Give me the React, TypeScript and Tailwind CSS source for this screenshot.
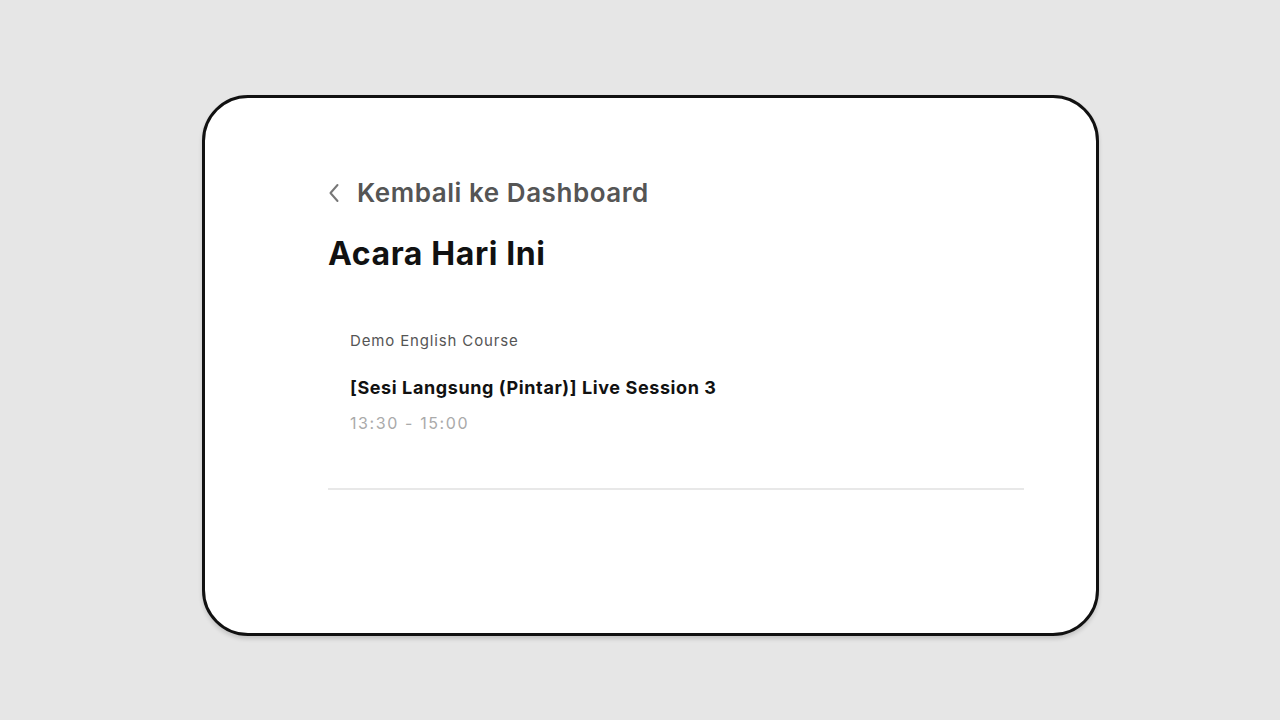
import React from "react";

export default function App() {
  return (
    <div
      className="w-[1280px] h-[720px] bg-[#e6e6e6] pt-[95px] pl-[202px]"
      style={{ fontFamily: "Inter, 'Noto Sans', sans-serif" }}
    >
      <div className="w-[897px] h-[541px] bg-white border-[3px] border-[#111] rounded-[46px] shadow-[0_3px_4px_rgba(0,0,0,0.15)] pl-[123px] pr-[72px] pt-[78px]">
        <div className="flex items-center gap-[17px] text-[#555]">
          <svg width="12" height="20" viewBox="0 0 12 20" fill="none">
            <path d="M9.5 2 L2.5 10 L9.5 18" stroke="#777" strokeWidth="2" strokeLinecap="round" strokeLinejoin="round" />
          </svg>
          <span className="text-[26px] font-semibold leading-[34px] tracking-[0.55px]">Kembali ke Dashboard</span>
        </div>
        <h1 className="mt-[24px] text-[32px] font-bold leading-[40px] text-[#111] tracking-[0.6px]">Acara Hari Ini</h1>
        <div className="mt-[57px] pl-[22px]">
          <div className="text-[15px] leading-[20px] text-[#555] tracking-[0.85px]">Demo English Course</div>
          <div className="mt-[25px] text-[18px] font-bold leading-[24px] text-[#111] tracking-[0.6px]">[Sesi Langsung (Pintar)] Live Session 3</div>
          <div className="mt-[12px] text-[16px] leading-[22px] text-[#aaa] tracking-[1.6px]">13:30 - 15:00</div>
        </div>
        <div className="mt-[54px] h-[2px] bg-[#e8e8e8]"></div>
      </div>
    </div>
  );
}
